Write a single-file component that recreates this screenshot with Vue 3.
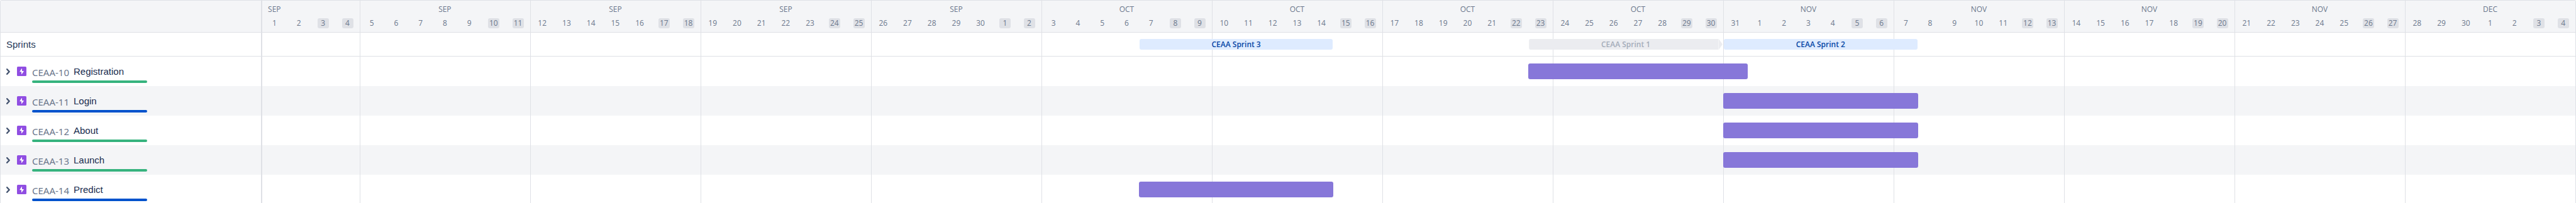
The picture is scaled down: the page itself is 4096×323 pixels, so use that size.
<script setup>
const FIRST = Date.UTC(2022, 8, 1)
const DAY_MS = 86400000
const TOTAL = 95

const months = ['JAN', 'FEB', 'MAR', 'APR', 'MAY', 'JUN', 'JUL', 'AUG', 'SEP', 'OCT', 'NOV', 'DEC']

const days = Array.from({ length: TOTAL }, (_, i) => {
  const d = new Date(FIRST + i * DAY_MS)
  const wd = d.getUTCDay()
  return {
    key: i,
    num: d.getUTCDate(),
    month: wd === 4 ? months[d.getUTCMonth()] : '',
    weekend: wd === 0 || wd === 6,
    monday: wd === 1,
  }
})

const sprints = [
  { name: 'CEAA Sprint 3', start: 36, length: 8, state: 'open' },
  { name: 'CEAA Sprint 1', start: 52, length: 8, state: 'closed' },
  { name: 'CEAA Sprint 2', start: 60, length: 8, state: 'open' },
]

const epics = [
  { id: 'CEAA-10', name: 'Registration', status: 'done', start: 52, length: 9 },
  { id: 'CEAA-11', name: 'Login', status: 'progress', start: 60, length: 8 },
  { id: 'CEAA-12', name: 'About', status: 'done', start: 60, length: 8 },
  { id: 'CEAA-13', name: 'Launch', status: 'done', start: 60, length: 8 },
  { id: 'CEAA-14', name: 'Predict', status: 'progress', start: 36, length: 8 },
]

const span = (item) => ({ gridColumn: `${item.start + 1} / span ${item.length}` })
</script>

<template>
  <main class="roadmap">
    <header class="row head">
      <div class="side"></div>
      <div class="track">
        <div v-for="d in days" :key="d.key" class="day" :class="{ monday: d.monday }">
          <span class="month">{{ d.month }}</span>
          <span class="num" :class="{ weekend: d.weekend }">{{ d.num }}</span>
        </div>
      </div>
    </header>

    <section class="row sprints">
      <div class="side sprint-title">Sprints</div>
      <div class="lane">
        <div class="track lines" aria-hidden="true">
          <i v-for="d in days" :key="d.key" :class="{ monday: d.monday }"></i>
        </div>
        <div class="track items">
          <button
            v-for="s in sprints"
            :key="s.name"
            type="button"
            class="sprint"
            :class="s.state"
            :style="span(s)"
          >{{ s.name }}</button>
        </div>
      </div>
    </section>

    <section v-for="e in epics" :key="e.id" class="row epic">
      <div class="side epic-side">
        <button type="button" class="toggle" :aria-label="'Expand ' + e.name">
          <svg width="6" height="10" viewBox="0 0 6 10">
            <path d="M1.2 1.2 4.7 5 1.2 8.8" fill="none" stroke="#42526e" stroke-width="2.3" stroke-linecap="round" stroke-linejoin="round" />
          </svg>
        </button>
        <svg class="type" width="15" height="15" viewBox="0 0 15 15" aria-hidden="true">
          <rect width="15" height="15" rx="1.6" fill="#904ee2" />
          <path d="M8 3.4v3.500h2.600c.3 0 .4.2.2.5L7.600 12c-.2.3-.6.2-.6-.2V8.300H4.600c-.3 0-.4-.3-.2-.5L7.400 3.300c.2-.3.6-.2.6.1z" fill="#fff" />
        </svg>
        <div class="info">
          <div class="names">
            <a href="#" class="id">{{ e.id }}</a>
            <span class="name">{{ e.name }}</span>
          </div>
          <div class="status" :class="e.status"></div>
        </div>
      </div>
      <div class="lane">
        <div class="track lines" aria-hidden="true">
          <i v-for="d in days" :key="d.key" :class="{ monday: d.monday }"></i>
        </div>
        <div class="track items">
          <button type="button" class="bar" :aria-label="e.name" :style="span(e)"></button>
        </div>
      </div>
    </section>
  </main>
</template>

<style>
body {
  margin: 0;
  background: #fff;
}
</style>

<style scoped>
.roadmap {
  box-sizing: border-box;
  height: 100vh;
  overflow: hidden;
  border: 1px solid #dfe1e6;
  border-bottom: 0;
  border-radius: 3px 3px 0 0;
  font-family: "Noto Sans", "Open Sans", sans-serif;
  color: #172b4d;
}

button {
  margin: 0;
  padding: 0;
  border: 0;
  background: none;
  font: inherit;
  color: inherit;
}

.row {
  display: grid;
  grid-template-columns: 416px 1fr;
  box-sizing: border-box;
}

.side {
  box-sizing: border-box;
  border-right: 2px solid #dfe1e6;
}

.track {
  display: grid;
  grid-template-columns: repeat(95, minmax(0, 1fr));
}

.head {
  height: 51px;
  background: #f4f5f7;
  border-bottom: 1px solid #dfe1e6;
}

.day {
  display: flex;
  flex-direction: column;
  align-items: center;
  padding-top: 6px;
  gap: 6px;
  font-family: "Open Sans", "Noto Sans", sans-serif;
  font-size: 12px;
  line-height: 16px;
  color: #6b778c;
}

.monday {
  box-shadow: inset 1px 0 #dfe1e6;
}

.month {
  height: 16px;
}

.num {
  width: 18px;
  text-align: center;
  border-radius: 3px;
}

.weekend {
  background: #dfe1e6;
}

.sprints {
  height: 38px;
  border-bottom: 1px solid #dfe1e6;
}

.sprint-title {
  display: flex;
  align-items: center;
  padding-left: 9px;
  font-family: "Liberation Sans", Arial, sans-serif;
  font-size: 15px;
  color: #253858;
}

.lane {
  display: grid;
}

.lane > .track {
  grid-area: 1 / 1;
}

.items {
  align-items: center;
}

.sprint {
  grid-row: 1;
  height: 17px;
  margin: 0 1px;
  border-radius: 3px;
  font-family: "Open Sans", "Noto Sans", sans-serif;
  font-size: 12px;
  font-weight: 600;
  line-height: 17px;
  text-align: center;
}

.sprint.open {
  background: #deebff;
  color: #0747a6;
}

.sprint.closed {
  background: linear-gradient(#f4f5f7, #f4f5f7) right 6px top / 1px 100% no-repeat #ebecf0;
  color: #a5adba;
  clip-path: polygon(0 0, calc(100% - 6px) 0, 100% 50%, calc(100% - 6px) 100%, 0 100%);
}

.epic {
  height: 47px;
}

.epic:nth-of-type(odd) {
  background: #f4f5f7;
}

.epic-side {
  display: flex;
  align-items: flex-start;
  padding: 16px 0 0 9px;
}

.toggle {
  display: flex;
  align-items: center;
  width: 17px;
  height: 15px;
}

.info {
  margin-left: 9px;
}

.names {
  display: flex;
  height: 22px;
  font-size: 15px;
}

.id {
  width: 66px;
  line-height: 18px;
  color: #6b778c;
  text-decoration: none;
}

.name {
  font-family: "Liberation Sans", Arial, sans-serif;
  line-height: 15px;
}

.status {
  width: 183px;
  height: 4px;
  border-radius: 2px;
}

.done {
  background: #36b37e;
}

.progress {
  background: #0052cc;
}

.bar {
  height: 25px;
  border-radius: 3px;
  background: #8777d9;
}
</style>
